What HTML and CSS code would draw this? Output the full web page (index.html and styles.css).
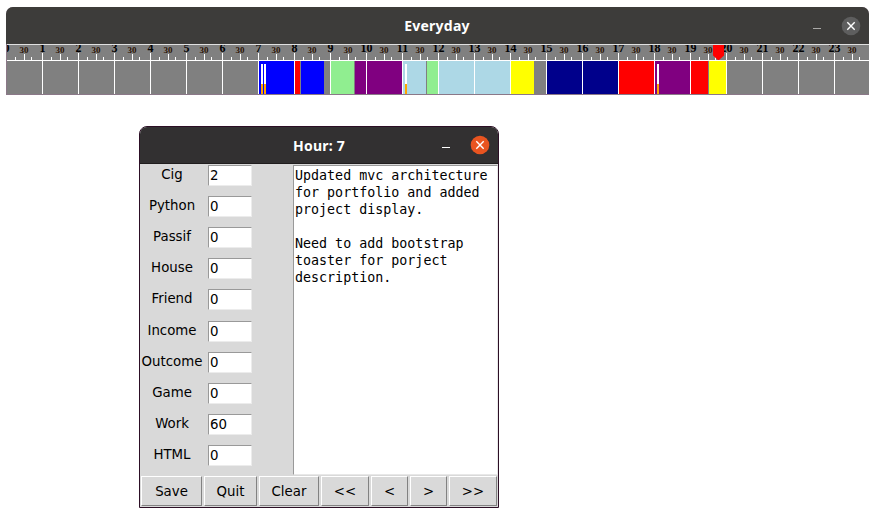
FILE: index.html
```html
<!DOCTYPE html>
<html lang="en">
<head>
<meta charset="utf-8">
<title>Everyday</title>
<link rel="stylesheet" href="styles.css">
</head>
<body>
<section class="window day">
  <header class="titlebar day-title">
    <h1>Everyday</h1>
    <svg class="controls" width="60" height="36" viewBox="0 0 60 36"><path d="M4 20.5h8" stroke="#aaa9a7"/><circle cx="42" cy="18" r="9.3" fill="#5e5e5e"/><path d="M38.3 14.3l7.4 7.4m0-7.4l-7.4 7.4" stroke="#fff" stroke-width="1.4"/></svg>
  </header>
  <svg class="timeline" id="timeline" width="862" height="49" viewBox="7 45 862 49"></svg>
</section>
<section class="window hour">
  <header class="titlebar hour-title">
    <h1>Hour: 7</h1>
    <svg class="controls" width="60" height="36" viewBox="0 0 60 36"><path d="M4 20.5h8" stroke="#fff"/><circle cx="42" cy="18" r="9.3" fill="#e95420"/><path d="M38.3 14.3l7.4 7.4m0-7.4l-7.4 7.4" stroke="#fff" stroke-width="1.4"/></svg>
  </header>
  <div class="content">
    <div class="fields">
      <div class="row"><label>Cig</label><span class="entry">2</span></div>
      <div class="row"><label>Python</label><span class="entry">0</span></div>
      <div class="row"><label>Passif</label><span class="entry">0</span></div>
      <div class="row"><label>House</label><span class="entry">0</span></div>
      <div class="row tall"><label>Friend</label><span class="entry">0</span></div>
      <div class="row"><label>Income</label><span class="entry">0</span></div>
      <div class="row"><label>Outcome</label><span class="entry">0</span></div>
      <div class="row"><label>Game</label><span class="entry">0</span></div>
      <div class="row"><label>Work</label><span class="entry">60</span></div>
      <div class="row"><label>HTML</label><span class="entry">0</span></div>
    </div>
    <div class="notes">Updated mvc architecture
for portfolio and added
project display.

Need to add bootstrap
toaster for porject
description.</div>
  </div>
  <footer class="buttons">
    <button class="save">Save</button><button class="quit">Quit</button><button class="clear">Clear</button><button class="first">&lt;&lt;</button><button class="prev">&lt;</button><button class="next">&gt;</button><button class="last">&gt;&gt;</button>
  </footer>
</section>
<script src="timeline.js"></script>
</body>
</html>
```
FILE: styles.css
```css
* { box-sizing: border-box; }
body {
  margin: 0;
  padding: 7px 0 0 6px;
  background: #fff;
  font-family: "DejaVu Sans", sans-serif;
  font-size: 13.33px;
  color: #000;
}
.titlebar {
  display: grid;
  grid-template-columns: 1fr auto 1fr;
  align-items: center;
  color: #fff;
}
.titlebar h1 {
  grid-column: 2;
  margin: 0;
  padding-top: 1px;
  font: bold 14px/20px "Noto Sans", sans-serif;
  letter-spacing: 0.25px;
}
.day-title h1 { padding-right: 1px; }
.controls { justify-self: end; }
.day { width: 863px; height: 88px; background: #8b7888; border-radius: 7px 7px 0 0; overflow: hidden; }
.day-title { height: 37px; background: #3d3c3a; }
.timeline { display: block; margin-left: 1px; border-top: 1px solid #e0e0e0; height: 50px; }
.tick { stroke: #fff; stroke-width: 1; }
.hour-label { font: bold 12px "Liberation Serif", serif; text-anchor: middle; }
.half-label { font: bold 9px "Liberation Serif", serif; text-anchor: middle; fill: #2a1000; }
.hour {
  width: 360px;
  height: 382px;
  margin: 31px 0 0 133px;
  border: 1px solid #2c0e25;
  border-radius: 8px 8px 0 0;
  background: #d9d9d9;
  overflow: hidden;
}
.hour-title { height: 37px; background: #323031; border-bottom: 1px solid #201d1e; }
.content { display: flex; height: 311px; }
.fields { width: 153px; padding-top: 1px; }
.row { display: flex; height: 31px; }
.row.tall { height: 32px; }
.row label { width: 63px; height: 20px; padding-left: 1px; line-height: 20px; text-align: center; white-space: nowrap; }
.entry {
  width: 44px;
  height: 21px;
  margin-left: 5px;
  padding-left: 1px;
  line-height: 20px;
  background: #fff;
  border: 1px solid;
  border-color: #999 #ececec #ececec #999;
}
.notes {
  width: 205px;
  padding: 1px;
  margin-top: 1px;
  background: #fff;
  border: 1px solid;
  border-color: #999 #e8e8e8 #e8e8e8 #999;
  font: 13.33px/17px "DejaVu Sans Mono", monospace;
  white-space: pre;
}
.buttons { display: flex; gap: 2px; padding: 1px 1px 0; }
button {
  height: 30px;
  padding: 0;
  font: inherit;
  color: inherit;
  background: #d9d9d9;
  border: 1px solid;
  border-color: #fff #828282 #828282 #fff;
  border-radius: 0;
}
.save { width: 61px; }
.quit { width: 53px; }
.clear { width: 60px; }
.first { width: 48px; }
.prev, .next { width: 37px; }
.last { width: 48px; }
```
FILE: timeline.js
```js
const blocks = [
  [259, 294, "blue"], [295, 300, "red"], [301, 324, "blue"],
  [331, 354, "lightgreen"], [355, 402, "purple"],
  [403, 426, "lightblue"], [427, 438, "lightgreen"], [439, 510, "lightblue"],
  [511, 534, "yellow"], [547, 618, "darkblue"], [619, 654, "red"],
  [655, 690, "purple"], [691, 708, "red"], [709, 726, "yellow"]
];
const bars = [261, 264, 405, 657];
let out = '<rect x="7" y="45" width="862" height="49" fill="gray"/>';
for (const [from, to, fill] of blocks) {
  out += `<rect x="${from}" y="61" width="${to - from}" height="33" fill="${fill}"/>`;
}
for (const x of bars) {
  out += `<rect x="${x}" y="64" width="2" height="20" fill="white"/><rect x="${x}" y="84" width="2" height="10" fill="orange"/>`;
}
for (let h = 0; h < 24; h++) {
  const x = 6 + h * 36;
  out += `<text class="hour-label" x="${x + 0.5}" y="52">${h}</text>`;
  out += `<text class="half-label" x="${x + 18}" y="53">30</text>`;
  out += `<path class="tick" d="M${x + 0.5} 53V94M${x + 9.5} 57V60M${x + 18.5} 54V60M${x + 25.5} 57V60"/>`;
}
out += '<path class="tick" d="M726.5 53V94M7 60.5H869"/>';
out += '<path d="M713 45h11v10.5l-5 4.5h-1l-5-4.5z" fill="red"/>';
document.getElementById("timeline").innerHTML = out;
```
